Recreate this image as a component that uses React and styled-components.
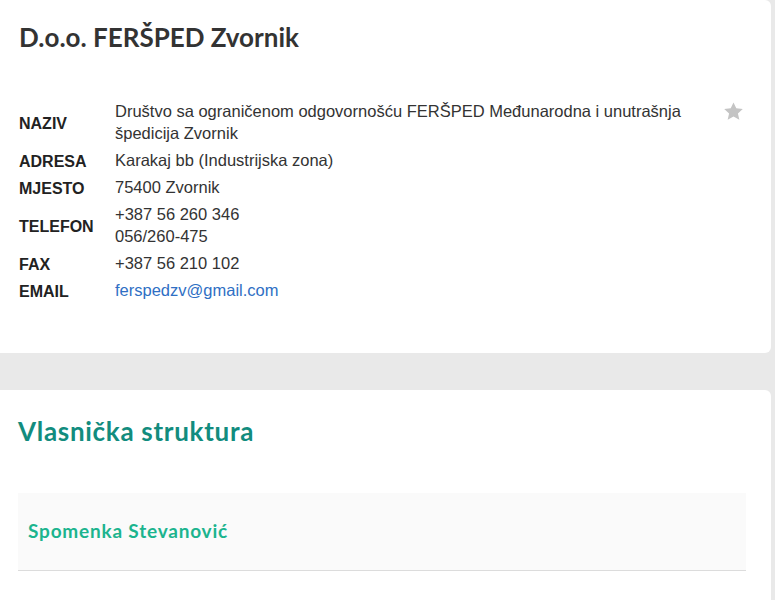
import React from "react";
import styled, { createGlobalStyle } from "styled-components";

const GlobalStyle = createGlobalStyle`
  body {
    margin: 0;
    background: #e9e9e9;
    font-family: "Liberation Sans", Arial, sans-serif;
  }
`;

const Page = styled.div`
  display: flex;
  flex-direction: column;
  gap: 37px;
  padding-right: 4px;
  height: 600px;
  overflow: hidden;
`;

const Card = styled.section`
  background: #ffffff;
  border-radius: 0 6px 6px 0;
  padding: ${(props) => props.pad || "0 19px"};
  flex-shrink: 0;
`;

const CompanyTitle = styled.h1`
  margin: 0;
  padding: 22px 0 0;
  font-family: "Lato", "Open Sans", sans-serif;
  font-weight: 700;
  font-size: 26px;
  line-height: 30px;
  color: #333333;
`;

const InfoRow = styled.div`
  display: flex;
  align-items: flex-start;
  margin-top: 45px;
`;

const InfoTable = styled.table`
  border-collapse: collapse;
  flex: 1;
  font-size: 16.5px;
  line-height: 22px;
`;

const Label = styled.th`
  text-align: left;
  vertical-align: middle;
  font-weight: 700;
  font-size: 16px;
  color: #222222;
  width: 96px;
  padding: 4.5px 0 0.5px;
`;

const Value = styled.td`
  vertical-align: middle;
  color: #333333;
  padding: 2.5px 0;
`;

const Mail = styled.a`
  color: #2f6fc4;
  text-decoration: none;
`;

const Star = styled.svg`
  width: 23px;
  height: 23px;
  margin: 3px 7px 0 20px;
  fill: #c4c4c4;
`;

const SectionTitle = styled.h2`
  margin: 0;
  padding: 25px 0 0;
  font-family: "Lato", "Open Sans", sans-serif;
  font-weight: 700;
  font-size: 26px;
  line-height: 32px;
  letter-spacing: 0.7px;
  color: #128c7e;
`;

const Owner = styled.div`
  margin: 46px 25px 0 0;
  background: #fafafa;
  border-bottom: 1px solid #dcdcdc;
  padding: 23px 10px 24px;
`;

const OwnerName = styled.span`
  font-family: "Lato", "Open Sans", sans-serif;
  font-weight: 700;
  font-size: 19px;
  line-height: 30px;
  letter-spacing: 0.8px;
  color: #1cb48e;
`;

const rows = [
  {
    label: "NAZIV",
    lines: [
      "Društvo sa ograničenom odgovornošću FERŠPED Međunarodna i unutrašnja",
      "špedicija Zvornik",
    ],
  },
  { label: "ADRESA", lines: ["Karakaj bb (Industrijska zona)"] },
  { label: "MJESTO", lines: ["75400 Zvornik"] },
  { label: "TELEFON", lines: ["+387 56 260 346", "056/260-475"] },
  { label: "FAX", lines: ["+387 56 210 102"] },
];

export default function App() {
  return (
    <>
      <GlobalStyle />
      <Page>
        <Card pad="0 19px 50px">
          <CompanyTitle>D.o.o. FERŠPED Zvornik</CompanyTitle>
          <InfoRow>
            <InfoTable>
              <tbody>
                {rows.map((row) => (
                  <tr key={row.label}>
                    <Label>{row.label}</Label>
                    <Value>
                      {row.lines.map((line, i) => (
                        <React.Fragment key={i}>
                          {i > 0 && <br />}
                          {line}
                        </React.Fragment>
                      ))}
                    </Value>
                  </tr>
                ))}
                <tr>
                  <Label>EMAIL</Label>
                  <Value>
                    <Mail href="mailto:ferspedzv@gmail.com">ferspedzv@gmail.com</Mail>
                  </Value>
                </tr>
              </tbody>
            </InfoTable>
            <Star viewBox="0 0 24 24">
              <path d="M12 2.5l2.9 6.2 6.8.7-5.1 4.6 1.5 6.7L12 17.3l-6.1 3.4 1.5-6.7-5.1-4.6 6.8-.7z" />
            </Star>
          </InfoRow>
        </Card>
        <Card pad="0 0 40px 18px">
          <SectionTitle>Vlasnička struktura</SectionTitle>
          <Owner>
            <OwnerName>Spomenka Stevanović</OwnerName>
          </Owner>
        </Card>
      </Page>
    </>
  );
}
